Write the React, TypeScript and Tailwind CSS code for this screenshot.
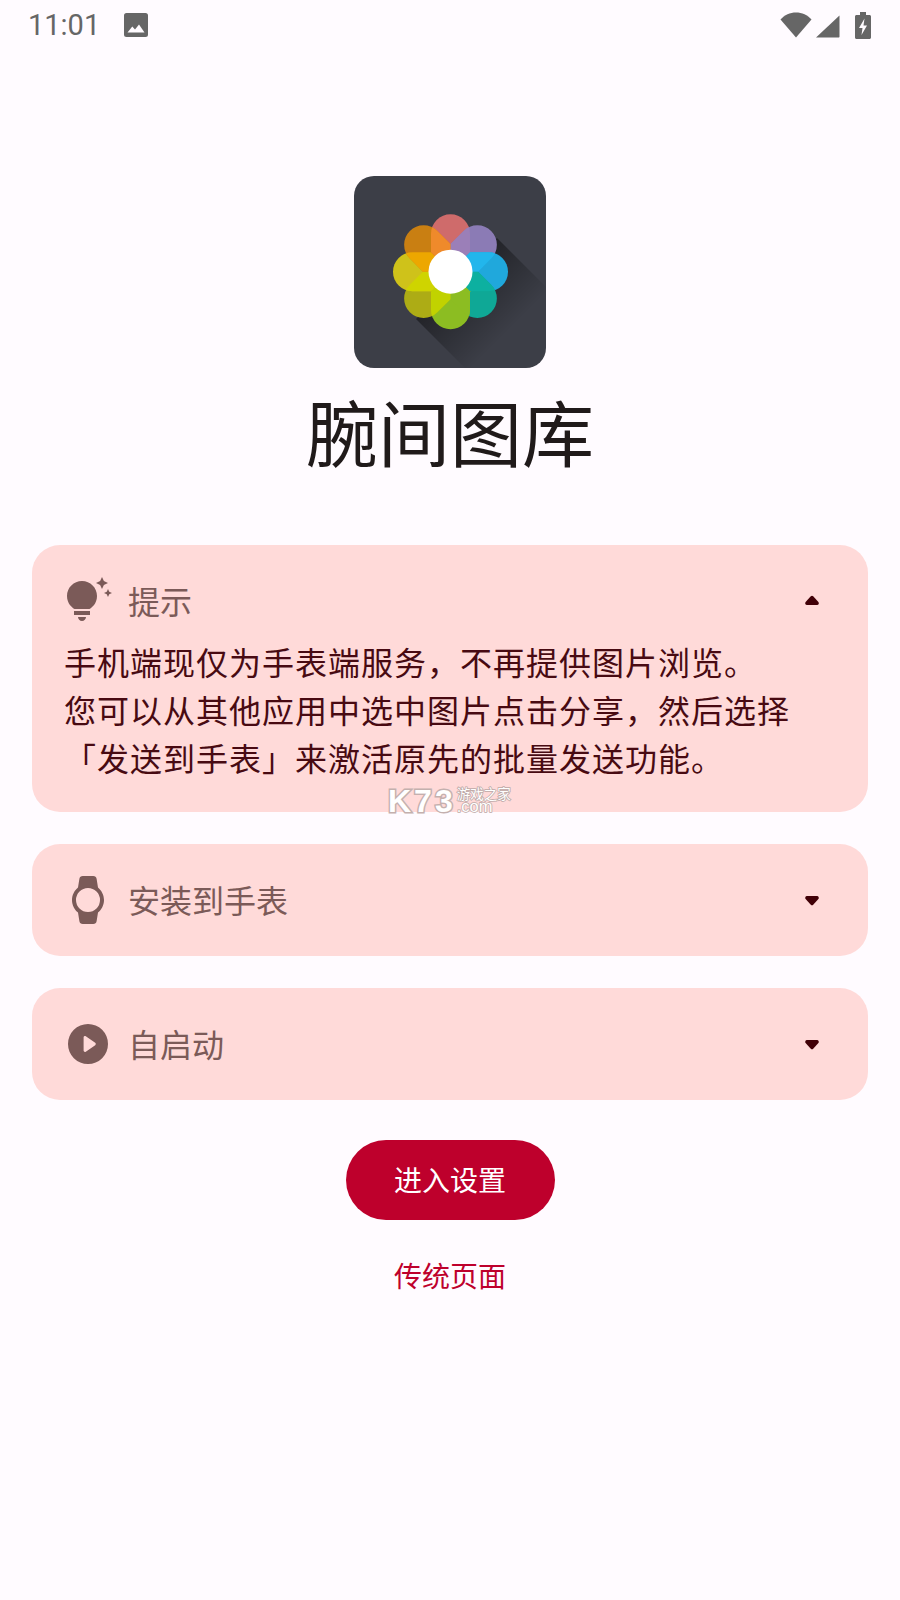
import React from "react";

const cjk = "font-['Noto_Sans_CJK_SC','Noto_Sans',sans-serif]";

const petal = "M-19.500 -38 A19.500 19.500 0 0 1 19.500 -38 L19.500 -19.500 L0 0 L-19.500 -19.500 Z";
const petalColors = ["#cf6b6b", "#8b7bb5", "#20a8dc", "#0fa896", "#8cbd22", "#adac15", "#cfc21a", "#c97f12"];
const overlapColors = ["#9b7fb8", "#22b6ec", "#0db0a0", "#8cbd22", "#c1d200", "#cfd400", "#eda700", "#ef8a2b"];

function Logo() {
  const cx = 96.5;
  const cy = 95.7;
  return (
    <svg width="192" height="192" viewBox="0 0 192 192" className="block">
      <defs>
        <clipPath id="tile">
          <rect width="192" height="192" rx="20" />
        </clipPath>
        <linearGradient id="long" x1="100" y1="100" x2="155" y2="155" gradientUnits="userSpaceOnUse">
          <stop offset="0" stopColor="#000" stopOpacity="0.45" />
          <stop offset="1" stopColor="#000" stopOpacity="0" />
        </linearGradient>
        {petalColors.map((_, i) => (
          <clipPath id={`petal${i}`} key={i}>
            <path d={petal} transform={`rotate(${i * 45})`} />
          </clipPath>
        ))}
      </defs>
      <g clipPath="url(#tile)">
        <rect width="192" height="192" fill="#3c3e47" />
        <polygon points="143,62 240,159 159,240 62,143" fill="url(#long)" />
        <g transform={`translate(${cx} ${cy})`}>
          {petalColors.map((c, i) => (
            <path key={i} d={petal} fill={c} transform={`rotate(${i * 45})`} />
          ))}
          {overlapColors.map((c, i) => (
            <g key={i} clipPath={`url(#petal${i})`}>
              <path d={petal} fill={c} transform={`rotate(${((i + 1) % 8) * 45})`} />
            </g>
          ))}
          <circle r="22" fill="#fff" />
        </g>
      </g>
    </svg>
  );
}

function BulbIcon() {
  return (
    <svg width="48" height="48" viewBox="0 0 24 24" fill="#7b5a58" className="shrink-0">
      <path d="M7 20h4c0 1.100-.9 2-2 2s-2-.9-2-2zm-2-1h8v-2H5v2zm11.500-9.500c0 3.820-2.660 5.860-3.770 6.500H5.270c-1.110-.64-3.770-2.680-3.770-6.500C1.500 5.360 4.860 2 9 2s7.500 3.360 7.500 7.500zm4.870-2.130L20 8l1.370.63L22 10l.63-1.370L24 8l-1.370-.63L22 6l-.63 1.370zM19 6l.94-2.060L22 3l-2.060-.94L19 0l-.94 2.060L16 3l2.060.94L19 6z" />
    </svg>
  );
}

function WatchIcon() {
  return (
    <svg width="48" height="48" viewBox="0 0 24 24" fill="#7b5a58" className="shrink-0">
      <path
        fillRule="evenodd"
        d="M9.400 0h5.200c1 0 1.500.5 1.700 1.400l.7 4.300C18.700 7.100 20 9.400 20 12s-1.300 4.900-3 6.300l-.7 4.300c-.2.900-.7 1.400-1.700 1.400H9.400c-1 0-1.500-.5-1.700-1.400L7 18.300C5.300 16.900 4 14.600 4 12s1.300-4.900 3-6.300l.7-4.300C7.900.5 8.400 0 9.400 0zM12 6a6 6 0 1 0 0 12a6 6 0 0 0 0-12z"
      />
    </svg>
  );
}

function PlayIcon() {
  return (
    <svg width="48" height="48" viewBox="0 0 24 24" fill="#7b5a58" className="shrink-0">
      <path
        fillRule="evenodd"
        d="M12 2a10 10 0 1 0 0 20a10 10 0 0 0 0-20zM9.800 8.700c0-.6.6-.9 1.100-.6l4.700 3.300c.4.300.4.900 0 1.200l-4.700 3.300c-.5.300-1.100 0-1.100-.6z"
      />
    </svg>
  );
}

function Caret({ up }: { up?: boolean }) {
  return (
    <div className="w-12 h-12 flex items-center justify-center shrink-0">
      <svg width="16" height="12" viewBox="0 0 16 12" fill="#410007" className={up ? "" : "rotate-180"}>
        <path d="M6.800 1.300 L1.600 6.900 C0.700 7.900 1.300 10 3 10 H13 C14.700 10 15.300 7.900 14.400 6.900 L9.200 1.300 C8.500 .6 7.500 .6 6.800 1.300 Z" />
      </svg>
    </div>
  );
}

function CardHeader({ icon, label, up }: { icon: React.ReactNode; label: string; up?: boolean }) {
  return (
    <div className="flex items-center h-12">
      {icon}
      <span className="ml-4 pb-[2px] text-[32px] leading-[46px] text-[#7b5a58]">{label}</span>
      <div className="flex-1" />
      <Caret up={up} />
    </div>
  );
}

export default function App() {
  return (
    <div className={`relative w-[900px] h-[1600px] overflow-hidden bg-[#fffbff] ${cjk}`}>
      <div className="flex items-center h-[50px] pl-[28px] pr-[29px]">
        <span className="pt-[1px] font-['Roboto',sans-serif] text-[29px] leading-[49px] text-[#666666]">11:01</span>
        <svg width="24" height="24" viewBox="0 0 24 24" fill="#666666" className="ml-[24px]">
          <path
            fillRule="evenodd"
            d="M2.500 0h19A2.500 2.500 0 0 1 24 2.500v19a2.500 2.500 0 0 1-2.500 2.500h-19A2.500 2.500 0 0 1 0 21.500v-19A2.500 2.500 0 0 1 2.500 0zM3.500 19.500h17L15 11.500l-4 5-2.700-3z"
          />
        </svg>
        <div className="flex-1" />
        <svg width="32" height="26" viewBox="0 0 32 26" fill="#666666">
          <path d="M16 25.500 L0.500 7.500 C4.500 3 10 .5 16 .5 C22 .5 27.500 3 31.500 7.500 Z" />
        </svg>
        <svg width="25" height="23" viewBox="0 0 25 23" fill="#666666" className="ml-[3px] mt-[3px]">
          <path d="M24.500 0.500 V21.500 C24.500 22.200 24.200 22.500 23.500 22.500 H1 Z" />
        </svg>
        <svg width="16" height="27" viewBox="0 0 16 27" fill="#666666" className="ml-[15px]">
          <path
            fillRule="evenodd"
            d="M5 0h6v3h3.500c.8 0 1.500.7 1.500 1.500V25.500c0 .8-.7 1.500-1.500 1.500H1.500C.7 27 0 26.300 0 25.500V4.500C0 3.700.7 3 1.500 3H5zM9.500 6.500L4 16h3.500l-1 7L12 13.500H8.500z"
          />
        </svg>
      </div>

      <div className="flex flex-col items-center">
        <div className="mt-[126px]">
          <Logo />
        </div>
        <h1 className="mt-[10px] text-[72px] leading-[104px] font-normal text-[#201a1a]">腕间图库</h1>
      </div>

      <div className="flex flex-col gap-8 mx-8 mt-[63px]">
        <div className="rounded-[28px] bg-[#ffdad9] pt-8 px-8 pb-[31px]">
          <CardHeader icon={<BulbIcon />} label="提示" up />
          <p className="mt-[12px] text-[32px] tracking-[1px] leading-[48px] text-[#480a12]">
            手机端现仅为手表端服务，不再提供图片浏览。
            <br />
            您可以从其他应用中选中图片点击分享，然后选择
            <br />
            「发送到手表」来激活原先的批量发送功能。
          </p>
        </div>
        <div className="rounded-[28px] bg-[#ffdad9] p-8">
          <CardHeader icon={<WatchIcon />} label="安装到手表" />
        </div>
        <div className="rounded-[28px] bg-[#ffdad9] p-8">
          <CardHeader icon={<PlayIcon />} label="自启动" />
        </div>
      </div>

      <div className="flex flex-col items-center mt-10">
        <div className="flex items-center justify-center w-[209px] h-20 pb-[2px] rounded-full bg-[#be002c] text-[28px] text-white">
          进入设置
        </div>
        <div className="mt-[31px] flex items-center justify-center h-[48px] text-[28px] text-[#be002c]">传统页面</div>
      </div>

      <div className="absolute left-[388px] top-[789px] flex items-start">
        <span className="font-['Liberation_Sans',sans-serif] font-bold text-[32px] leading-[24px] tracking-[3px] text-white [paint-order:stroke_fill] [-webkit-text-stroke:3px_#c4b0ae]">
          K73
        </span>
        <div className="ml-[1px] -mt-[2px] flex flex-col items-start">
          <span className="text-[13.500px] leading-[13px] text-white [paint-order:stroke_fill] [-webkit-text-stroke:1.500px_#bda9a7]">游戏之家</span>
          <span className="font-['Liberation_Sans',sans-serif] text-[16.500px] leading-[12px] text-white [paint-order:stroke_fill] [-webkit-text-stroke:1.500px_#bda9a7]">.com</span>
        </div>
      </div>
    </div>
  );
}
